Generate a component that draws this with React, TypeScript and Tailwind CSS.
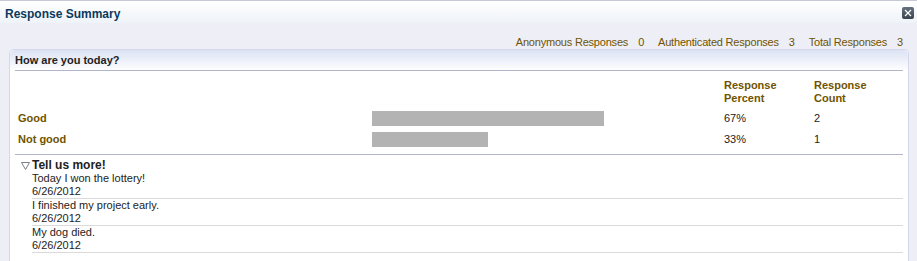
import React from "react";

const olive = "text-[#6f5400]";

const comments = [
  { text: "Today I won the lottery!", date: "6/26/2012" },
  { text: "I finished my project early.", date: "6/26/2012" },
  { text: "My dog died.", date: "6/26/2012" },
];

const answers = [
  { label: "Good", pct: "67%", count: "2", bar: 232 },
  { label: "Not good", pct: "33%", count: "1", bar: 116 },
];

export default function App() {
  return (
    <div className="w-[917px] h-[261px] overflow-hidden bg-[#eeeef7] font-['Liberation_Sans',Arial,sans-serif] text-[11px] text-[#222]">
      {/* title bar */}
      <div className="h-[23px] border-t border-[#c5c8d6] bg-gradient-to-b from-white to-[#eef3f8] flex items-center justify-between pl-[5px] pr-[3px] pt-[3px]">
        <span className="text-[12px] font-bold text-[#0b3a5c] leading-none">Response Summary</span>
        <button className="w-[12px] h-[12px] mb-[2px] rounded-[2px] bg-gradient-to-b from-[#66727f] to-[#39444f] flex items-center justify-center">
          <svg width="8" height="8" viewBox="0 0 8 8">
            <path d="M1 1 L7 7 M7 1 L1 7" stroke="white" strokeWidth="1.2" />
          </svg>
        </button>
      </div>

      {/* totals */}
      <div className={`flex justify-end pr-[14px] pt-[13px] h-[26px] leading-[13px] tracking-[-0.2px] ${olive}`}>
        <span>Anonymous Responses</span>
        <span className="ml-[10px]">0</span>
        <span className="ml-[14px]">Authenticated Responses</span>
        <span className="ml-[10px]">3</span>
        <span className="ml-[14px]">Total Responses</span>
        <span className="ml-[10px]">3</span>
      </div>

      {/* question panel */}
      <div className="ml-[9px] w-[900px] pb-[20px] rounded-t-[5px] border-t border-x border-[#d3d9ea] bg-white">
        <div className="h-[21px] rounded-t-[5px] bg-gradient-to-b from-[#dbe2f3] to-white px-[5px]">
          <div className="h-[21px] border-b border-[#b1b5c9] flex items-end pb-[2px] font-bold text-[#222]">
            How are you today?
          </div>
        </div>

        <div className="mx-[5px] border-b border-[#b1b5c9]">
          <div className="grid grid-cols-[357px_352px_90px_1fr] h-[37px] pt-[8px]">
            <div />
            <div />
            <div className={`font-bold leading-[13px] ${olive}`}>Response<br />Percent</div>
            <div className={`font-bold leading-[13px] ${olive}`}>Response<br />Count</div>
          </div>
          <div className="pb-[4px]">
            {answers.map((a) => (
              <div key={a.label} className="grid grid-cols-[357px_352px_90px_1fr] h-[21px] items-center">
                <div className={`pl-[3px] font-bold ${olive}`}>{a.label}</div>
                <div>
                  <div className="h-[15px] bg-[#b3b3b3]" style={{ width: a.bar }} />
                </div>
                <div>{a.pct}</div>
                <div>{a.count}</div>
              </div>
            ))}
          </div>
        </div>

        <div className="mx-[5px]">
          <div className="flex items-center h-[17px] pt-[4px] leading-[13px]">
            <svg width="9" height="8" viewBox="0 0 9 8" className="ml-[6px]">
              <path d="M0.5 0.5 H8.5 L4.5 7.5 Z" fill="none" stroke="#7a7f8c" strokeWidth="1" />
            </svg>
            <span className="font-bold text-[12px] ml-[2px]">Tell us more!</span>
          </div>
          <div className="ml-[17px]">
            {comments.map((c, i) => (
              <div key={i} className="h-[27px] border-b border-[#dadada] leading-[13px]">
                <div>{c.text}</div>
                <div>{c.date}</div>
              </div>
            ))}
          </div>
        </div>
      </div>
    </div>
  );
}
